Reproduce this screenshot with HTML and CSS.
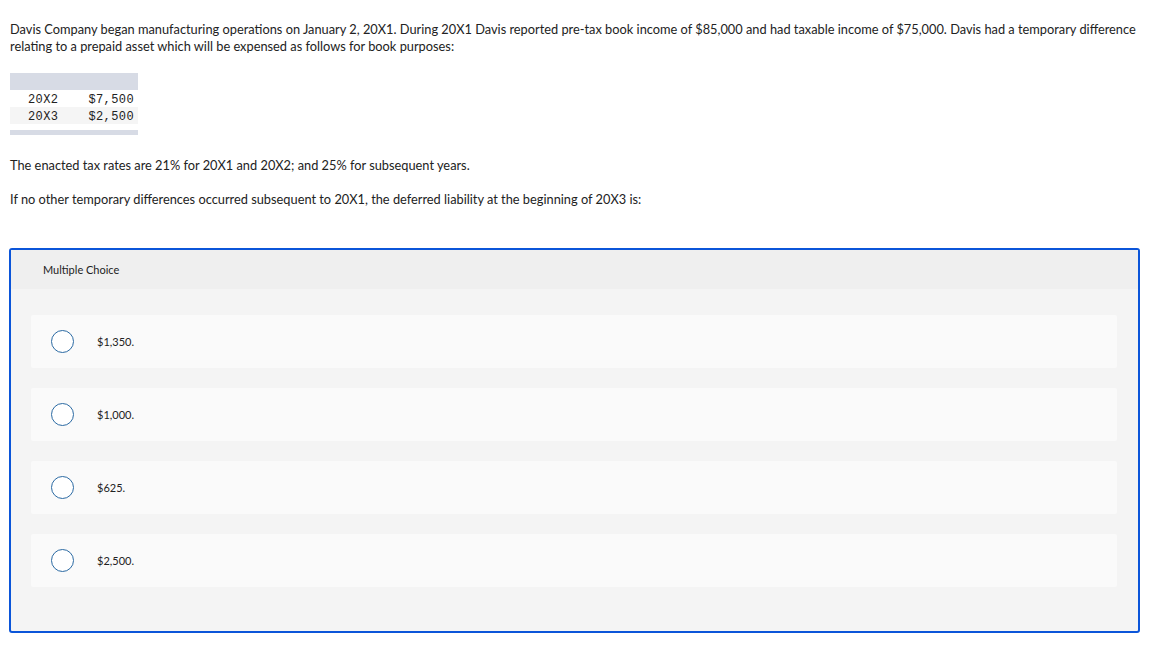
FILE: index.html
```html
<!DOCTYPE html>
<html>
<head>
<meta charset="utf-8">
<link rel="stylesheet" href="styles.css">
</head>
<body>
<div class="page">
  <p class="intro">Davis Company began manufacturing operations on January 2, 20X1. During 20X1 Davis reported pre-tax book income of $85,000 and had taxable income of $75,000. Davis had a temporary difference relating to a prepaid asset which will be expensed as follows for book purposes:</p>
  <div class="tbl">
    <div class="tbl-head"></div>
    <div class="tbl-row"><span class="yr">20X2</span><span class="amt">$7,500</span></div>
    <div class="tbl-row alt"><span class="yr">20X3</span><span class="amt">$2,500</span></div>
    <div class="tbl-foot"></div>
  </div>
  <p class="para p1">The enacted tax rates are 21% for 20X1 and 20X2; and 25% for subsequent years.</p>
  <p class="para p2">If no other temporary differences occurred subsequent to 20X1, the deferred liability at the beginning of 20X3 is:</p>
  <div class="mc">
    <div class="mc-head">Multiple Choice</div>
    <div class="mc-body">
      <div class="opt"><span class="radio"></span><span class="opt-text">$1,350.</span></div>
      <div class="opt"><span class="radio"></span><span class="opt-text">$1,000.</span></div>
      <div class="opt"><span class="radio"></span><span class="opt-text">$625.</span></div>
      <div class="opt"><span class="radio"></span><span class="opt-text">$2,500.</span></div>
    </div>
  </div>
</div>
</body>
</html>
```
FILE: styles.css
```css
* { box-sizing: border-box; }
body {
  margin: 0;
  background: #fff;
  font-family: "Lato", "Open Sans", sans-serif;
  color: #222;
}
.page {
  padding: 21px 0 0 9px;
  width: 1141px;
}
.intro {
  margin: 0 0 0 1px;
  font-size: 12.8px;
  line-height: 17px;
}
.tbl {
  margin: 18px 0 0 1px;
  width: 128px;
  font-family: "Liberation Mono", "DejaVu Sans Mono", monospace;
  font-size: 12px;
  letter-spacing: 0.4px;
  color: #222;
}
.tbl-head { height: 17px; background: #d7dbe5; }
.tbl-row {
  height: 17px;
  display: flex;
  align-items: center;
  justify-content: space-between;
  padding: 2px 4px 0 18px;
}
.tbl-row.alt { background: #f5f5f5; }
.tbl-foot { height: 5px; margin-top: 6px; background: #d7dbe5; }
.para {
  margin: 0 0 0 1px;
  font-size: 12.8px;
  line-height: 17px;
}
.p1 { margin-top: 22px; }
.p2 { margin-top: 17px; }
.mc {
  margin-top: 40px;
  width: 1131px;
  border: 2px solid #0b55d9;
  border-radius: 3px;
  background: #f4f4f4;
}
.mc-head {
  height: 39px;
  background: #efefef;
  font-size: 11px;
  line-height: 39px;
  padding-left: 32px;
  color: #222;
}
.mc-body {
  padding: 26px 21px 44px 20px;
  display: flex;
  flex-direction: column;
  gap: 20px;
}
.opt {
  height: 53px;
  background: #fafafa;
  border-radius: 2px;
  display: flex;
  align-items: center;
  padding-left: 20px;
}
.radio {
  width: 23px;
  height: 23px;
  border: 1.5px solid #2b6aa3;
  border-radius: 50%;
  background: #fff;
  flex: none;
}
.opt-text {
  margin-left: 23px;
  font-size: 11px;
  color: #222;
}
```
